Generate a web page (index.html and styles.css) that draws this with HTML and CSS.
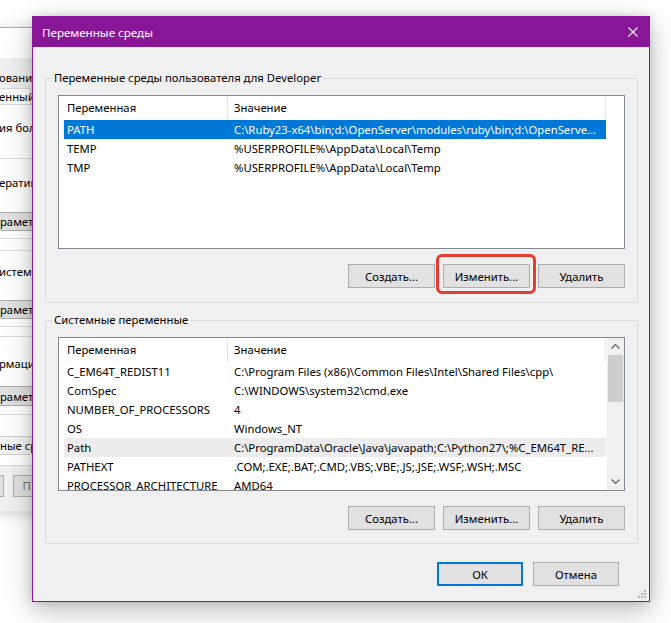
FILE: index.html
```html
<!DOCTYPE html>
<html lang="ru">
<head>
<meta charset="utf-8">
<title>Переменные среды</title>
<link rel="stylesheet" href="styles.css">
</head>
<body>
<div class="desktop">
  <div class="bgwin">
    <div class="bg-title"></div>
    <div class="bg-client">
      <div class="bg-tab1">ование</div>
      <div class="bg-tab2">енный</div>
      <div class="bg-panel">
        <div class="frag f1">ия бол</div>
        <div class="hline h1"></div>
        <div class="frag f2">ератив</div>
        <div class="bgbtn k1">рамет</div>
        <div class="hline h2"></div>
        <div class="hline h3"></div>
        <div class="frag f3">истему</div>
        <div class="bgbtn k2">рамет</div>
        <div class="hline h2"></div>
        <div class="hline h4"></div>
        <div class="frag f4">рмаци</div>
        <div class="bgbtn k3">рамет</div>
        <div class="hline h5"></div>
        <div class="bgbtn k4">ные ср</div>
      </div>
      <div class="bg-buttons">
        <div class="bgbtn2 first"></div>
        <div class="bgbtn2 second">П</div>
      </div>
    </div>
  </div>

  <div class="dialog">
    <div class="titlebar">
      <span class="title">Переменные среды</span>
      <svg class="close" width="10" height="10" viewBox="0 0 10 10"><path d="M0.5 0.5 L9.5 9.5 M9.5 0.5 L0.5 9.5" stroke="#fff" stroke-width="1.1" fill="none"/></svg>
    </div>
    <div class="client">
      <fieldset class="group g1">
        <legend>Переменные среды пользователя для Developer</legend>
        <div class="list">
          <div class="items">
            <div class="lhead"><div class="c1">Переменная</div><div class="c2">Значение</div></div>
            <div class="row sel"><div class="c1">PATH</div><div class="c2">C:\Ruby23-x64\bin;d:\OpenServer\modules\ruby\bin;d:\OpenServe...</div></div>
            <div class="row"><div class="c1">TEMP</div><div class="c2">%USERPROFILE%\AppData\Local\Temp</div></div>
            <div class="row"><div class="c1">TMP</div><div class="c2">%USERPROFILE%\AppData\Local\Temp</div></div>
          </div>
        </div>
        <div class="btnrow">
          <button class="btn">Создать...</button>
          <div class="hl-wrap"><button class="btn">Изменить...</button><div class="highlight"></div></div>
          <button class="btn">Удалить</button>
        </div>
      </fieldset>

      <fieldset class="group g2">
        <legend>Системные переменные</legend>
        <div class="list">
          <div class="items">
            <div class="lhead"><div class="c1">Переменная</div><div class="c2">Значение</div></div>
            <div class="row"><div class="c1">C_EM64T_REDIST11</div><div class="c2">C:\Program Files (x86)\Common Files\Intel\Shared Files\cpp\</div></div>
            <div class="row"><div class="c1">ComSpec</div><div class="c2">C:\WINDOWS\system32\cmd.exe</div></div>
            <div class="row"><div class="c1">NUMBER_OF_PROCESSORS</div><div class="c2">4</div></div>
            <div class="row"><div class="c1">OS</div><div class="c2">Windows_NT</div></div>
            <div class="row hover"><div class="c1">Path</div><div class="c2">C:\ProgramData\Oracle\Java\javapath;C:\Python27\;%C_EM64T_RE...</div></div>
            <div class="row"><div class="c1">PATHEXT</div><div class="c2">.COM;.EXE;.BAT;.CMD;.VBS;.VBE;.JS;.JSE;.WSF;.WSH;.MSC</div></div>
            <div class="row"><div class="c1">PROCESSOR_ARCHITECTURE</div><div class="c2">AMD64</div></div>
          </div>
          <div class="vscroll">
            <div class="arrow"><svg width="9" height="5" viewBox="0 0 9 5"><polyline points="0.5,4.5 4.5,0.5 8.5,4.5" fill="none" stroke="#606060" stroke-width="1.2"/></svg></div>
            <div class="thumb"></div>
            <div class="track"></div>
            <div class="arrow"><svg width="9" height="5" viewBox="0 0 9 5"><polyline points="0.5,0.5 4.5,4.5 8.5,0.5" fill="none" stroke="#606060" stroke-width="1.2"/></svg></div>
          </div>
        </div>
        <div class="btnrow">
          <button class="btn">Создать...</button>
          <button class="btn">Изменить...</button>
          <button class="btn">Удалить</button>
        </div>
      </fieldset>

      <div class="dlg-buttons">
        <button class="btn dlg default">ОК</button>
        <button class="btn dlg">Отмена</button>
      </div>
      <svg class="grip" width="10" height="10" viewBox="0 0 10 10">
        <rect x="7" y="1" width="2" height="2" fill="#b4b4b4"/>
        <rect x="4" y="4" width="2" height="2" fill="#b4b4b4"/>
        <rect x="7" y="4" width="2" height="2" fill="#b4b4b4"/>
        <rect x="1" y="7" width="2" height="2" fill="#b4b4b4"/>
        <rect x="4" y="7" width="2" height="2" fill="#b4b4b4"/>
        <rect x="7" y="7" width="2" height="2" fill="#b4b4b4"/>
      </svg>
    </div>
  </div>
</div>
</body>
</html>
```
FILE: styles.css
```css
html, body {
  margin: 0;
  padding: 0;
  background: #ffffff;
}

body {
  font-family: "Noto Sans", "Open Sans", sans-serif;
  font-size: 11.3px;
  color: #000;
}

.desktop {
  position: relative;
  width: 671px;
  height: 623px;
  overflow: hidden;
  background: #ffffff;
}

/* ---------- background window (System Properties) ---------- */
.bgwin {
  position: absolute;
  left: -10px;
  top: 27px;
  width: 70px;
  height: 484px;
  box-sizing: border-box;
  border-top: 1px solid #aaaaaa;
  background: #f0f0f0;
  display: flex;
  flex-direction: column;
  box-shadow: 0 3px 12px rgba(0, 0, 0, 0.18);
  white-space: nowrap;
  overflow: hidden;
}

.bg-title {
  height: 30px;
  background: #ffffff;
}

.bg-client {
  flex: 1;
  display: flex;
  flex-direction: column;
  background: #f0f0f0;
}

.bg-tab1 {
  margin-top: 9px;
  height: 21px;
  line-height: 21px;
  padding-left: 9px;
}

.bg-tab2 {
  width: 31px;
  height: 15px;
  line-height: 15px;
  padding-left: 9px;
  background: #ffffff;
  border-top: 1px solid #d9d9d9;
  border-right: 1px solid #d9d9d9;
}

.bg-panel {
  height: 362px;
  box-sizing: border-box;
  background: #ffffff;
  border-top: 1px solid #d9d9d9;
  border-bottom: 1px solid #d9d9d9;
  padding-left: 9px;
  display: flex;
  flex-direction: column;
}

.frag {
  height: 20px;
  line-height: 20px;
}

.f1 { margin-top: 13px; }
.f2 { margin-top: 14px; }
.f3 { margin-top: 11px; }
.f4 { margin-top: 17px; }

.hline {
  height: 1px;
  margin-left: -9px;
  background: #dcdcdc;
}

.h1 { margin-top: 20px; }
.h2 { margin-top: 7px; }
.h3 { margin-top: 11px; }
.h4 { margin-top: 9px; }
.h5 { margin-top: 8px; }

.bgbtn {
  margin-left: -9px;
  padding-left: 9px;
  box-sizing: border-box;
  background: #e1e1e1;
  border: 1px solid #adadad;
  display: flex;
  align-items: center;
}

.k1 { margin-top: 19px; height: 19px; }
.k2 { margin-top: 18px; height: 19px; }
.k3 { margin-top: 12px; height: 20px; }
.k4 { margin-top: 21px; height: 19px; background: #f4f4f4; border-color: #cfcfcf; }

.bg-buttons {
  margin-top: 9px;
  display: flex;
  height: 22px;
}

.bgbtn2 {
  box-sizing: border-box;
  height: 22px;
  background: #e1e1e1;
  border: 1px solid #adadad;
}

.bgbtn2.first {
  width: 19px;
}

.bgbtn2.second {
  margin-left: 9px;
  width: 60px;
  padding-left: 8px;
  line-height: 20px;
  color: #6d6d6d;
}

/* ---------- dialog ---------- */
.dialog {
  position: absolute;
  left: 32px;
  top: 16px;
  width: 618px;
  box-sizing: border-box;
  border: 1px solid #881798;
  background: #f0f0f0;
  display: flex;
  flex-direction: column;
  box-shadow: 0 8px 26px rgba(0, 0, 0, 0.28), 0 0 8px rgba(0, 0, 0, 0.12);
}

.titlebar {
  height: 30px;
  background: #881798;
  color: #ffffff;
  display: flex;
  align-items: center;
  justify-content: space-between;
  padding-left: 9px;
  font-size: 11.6px;
}

.close {
  margin-right: 11px;
  display: block;
}

.client {
  position: relative;
  display: flex;
  flex-direction: column;
  padding: 23px 11px 15px 12px;
}

.group {
  margin: 0;
  padding: 9px 12px 14px 12px;
  border: 1px solid #dcdcdc;
  min-width: 0;
}

.group legend {
  margin-left: -6px;
  padding: 0 2px;
  line-height: 16px;
}

.g2 {
  margin-top: 9px;
  padding-bottom: 13px;
}

.list {
  height: 154px;
  box-sizing: border-box;
  border: 1px solid #828790;
  background: #ffffff;
  display: flex;
  overflow: hidden;
}

.items {
  flex: 1;
  padding-left: 5px;
  overflow: hidden;
  white-space: nowrap;
}

.lhead,
.row {
  display: flex;
  width: 542px;
}

.lhead {
  height: 24px;
  line-height: 24px;
}

.row {
  height: 19px;
  line-height: 19px;
}

.c1 {
  width: 164px;
  flex: none;
  box-sizing: border-box;
  padding-left: 3px;
  overflow: hidden;
}

.c2 {
  width: 378px;
  flex: none;
  box-sizing: border-box;
  padding-left: 6px;
  overflow: hidden;
}

.lhead .c1,
.lhead .c2 {
  border-right: 1px solid #e5e5e5;
}

.row.sel {
  background: #0078d7;
  color: #ffffff;
}

.row.hover {
  background: #ececec;
}

.vscroll {
  width: 17px;
  flex: none;
  background: #f0f0f0;
  display: flex;
  flex-direction: column;
}

.arrow {
  height: 17px;
  display: flex;
  align-items: center;
  justify-content: center;
}

.thumb {
  height: 47px;
  margin: 0 1px;
  background: #cdcdcd;
}

.track {
  flex: 1;
}

.btnrow {
  display: flex;
  justify-content: flex-end;
  gap: 8px;
  margin-top: 15px;
}

.btn {
  width: 87px;
  height: 24px;
  box-sizing: border-box;
  margin: 0;
  padding: 0;
  border: 1px solid #adadad;
  background: #e1e1e1;
  font-family: inherit;
  font-size: 11.3px;
  color: #000;
  display: block;
}

.hl-wrap {
  position: relative;
}

.highlight {
  position: absolute;
  left: -7px;
  right: -6px;
  top: -10px;
  bottom: -6px;
  border: 3px solid #e53b30;
  border-radius: 6px;
  pointer-events: none;
}

.dlg-buttons {
  display: flex;
  justify-content: flex-end;
  gap: 10px;
  margin-top: 18px;
  padding-right: 19px;
}

.btn.dlg {
  width: 86px;
}

.btn.default {
  border: 2px solid #0078d7;
}

.grip {
  position: absolute;
  right: 2px;
  bottom: 2px;
}
```
